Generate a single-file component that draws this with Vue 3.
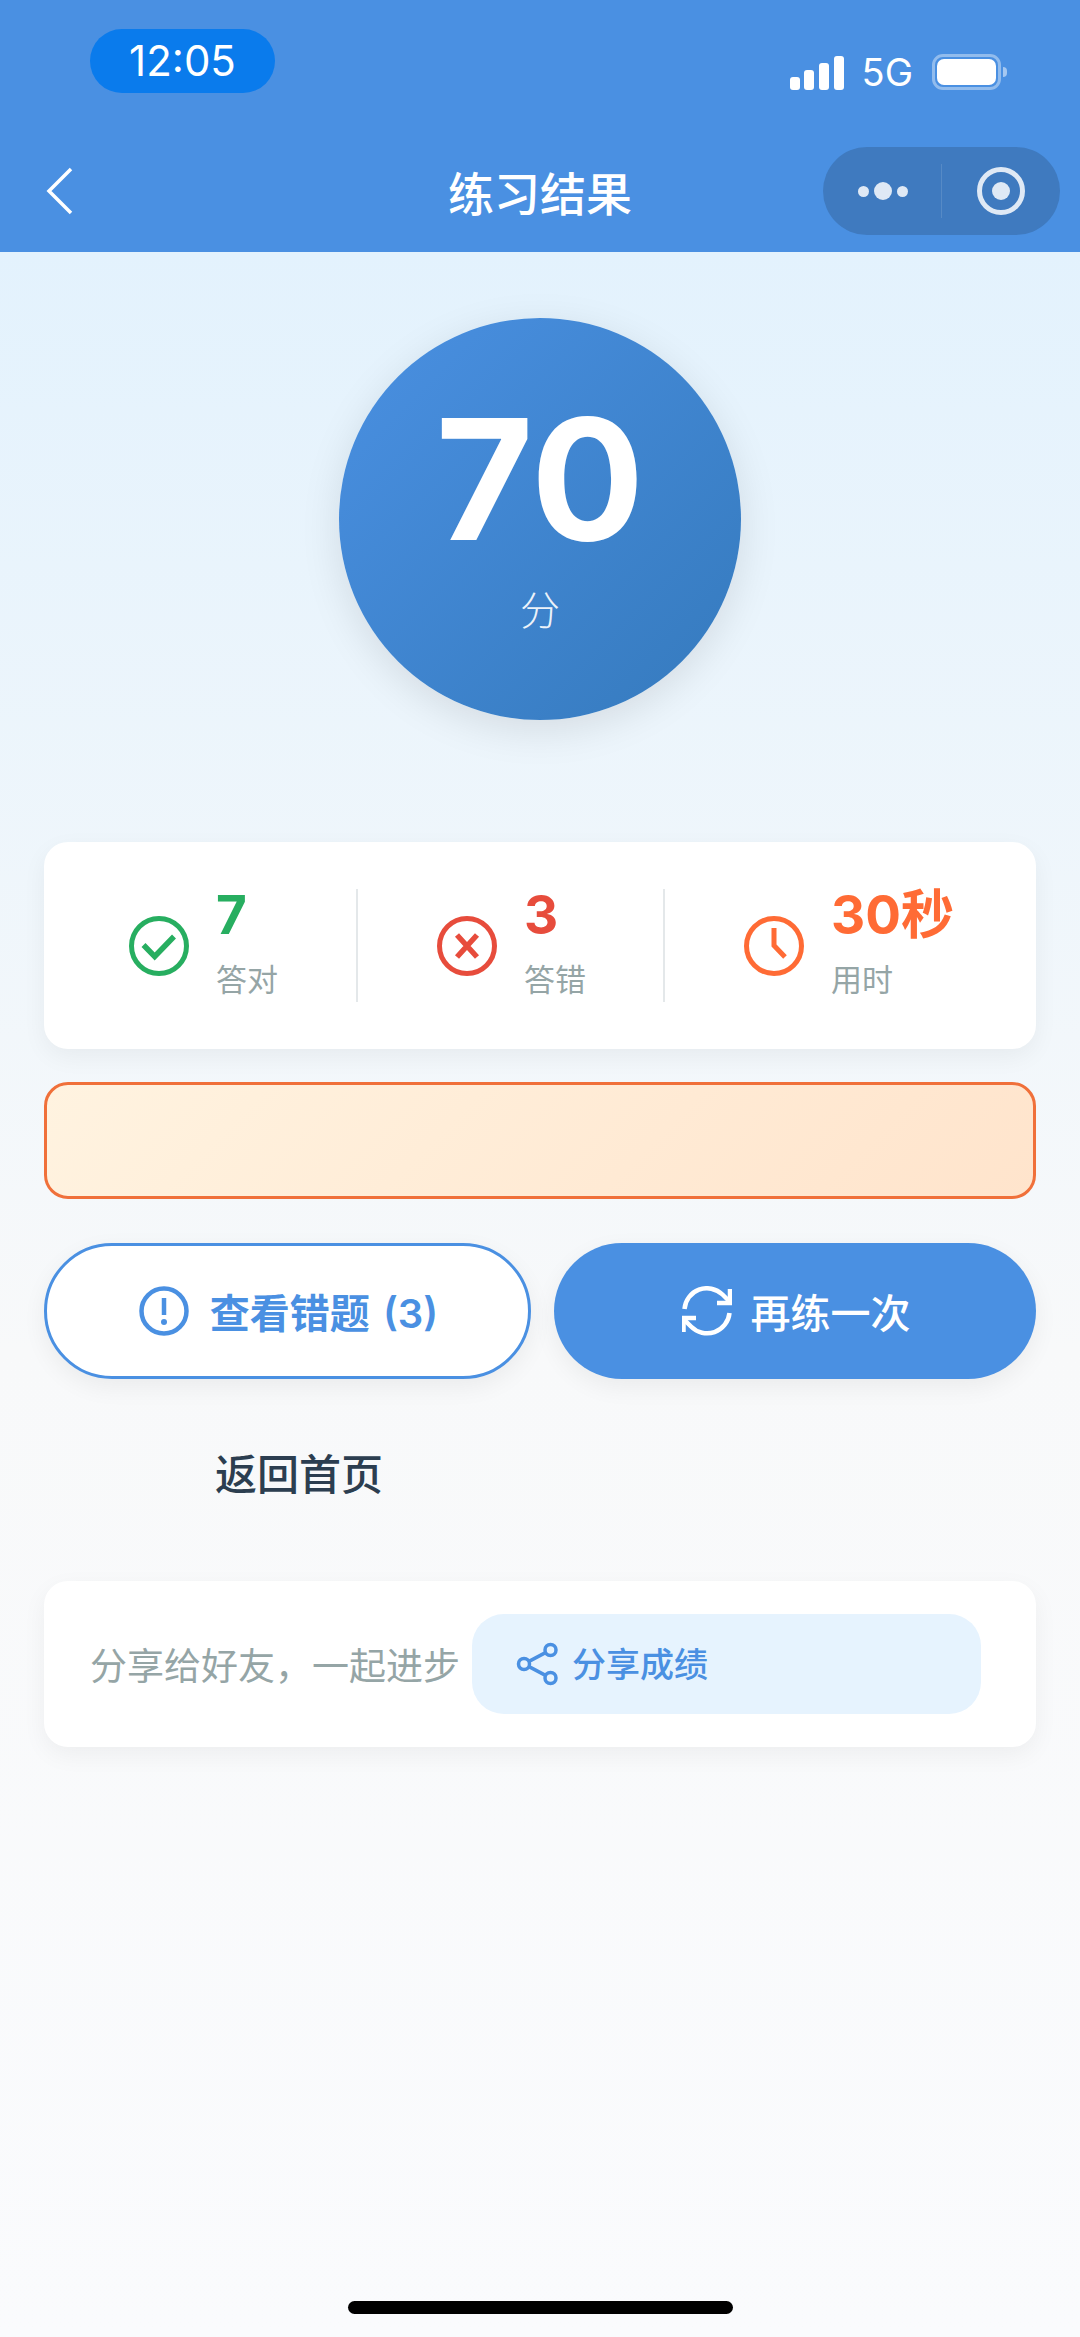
<template>
  <div class="page">
    <header class="header">
      <div class="status-bar">
        <div class="time-pill">{{ time }}</div>
        <div class="status-right">
          <div class="signal">
            <span v-for="h in signalBars" :key="h" class="signal-bar" :style="{ height: h + 'px' }"></span>
          </div>
          <span class="network">5G</span>
          <div class="battery">
            <div class="battery-level"></div>
          </div>
          <div class="battery-tip"></div>
        </div>
      </div>
      <div class="nav-bar">
        <svg class="back" width="30" height="50" viewBox="0 0 30 50">
          <polyline points="26,3 4,25 26,47" fill="none" stroke="#fff" stroke-width="3.5" />
        </svg>
        <div class="title">练习结果</div>
        <div class="capsule">
          <div class="capsule-dots">
            <span class="dot"></span>
            <span class="dot big"></span>
            <span class="dot"></span>
          </div>
          <div class="capsule-line"></div>
          <div class="capsule-target">
            <span class="target-core"></span>
          </div>
        </div>
      </div>
    </header>

    <main class="content">
      <div class="score-circle">
        <div class="score-num">{{ score }}</div>
        <div class="score-unit">分</div>
      </div>

      <section class="card stats">
        <div class="stat stat-ok">
          <svg class="stat-icon" width="60" height="60" viewBox="0 0 60 60" fill="none" stroke="#27ae60">
            <circle cx="30" cy="30" r="27.5" stroke-width="5" />
            <polyline points="14.5,29 25.7,40.5 45,20.5" stroke-width="5.5" />
          </svg>
          <div>
            <div class="stat-value">7</div>
            <div class="stat-label">答对</div>
          </div>
        </div>
        <div class="stat stat-bad">
          <svg class="stat-icon" width="60" height="60" viewBox="0 0 60 60" fill="none" stroke="#e74c3c">
            <circle cx="30" cy="30" r="27.5" stroke-width="5" />
            <path d="M20 19 L40 41 M40 19 L20 41" stroke-width="5.5" />
          </svg>
          <div>
            <div class="stat-value">3</div>
            <div class="stat-label">答错</div>
          </div>
        </div>
        <div class="stat stat-time">
          <svg class="stat-icon" width="60" height="60" viewBox="0 0 60 60" fill="none" stroke="#ff6b35">
            <circle cx="30" cy="30" r="27.5" stroke-width="5" />
            <polyline points="30,12 30,29.5 41,41" stroke-width="5" />
          </svg>
          <div>
            <div class="stat-value">30秒</div>
            <div class="stat-label">用时</div>
          </div>
        </div>
      </section>

      <div class="notice"></div>

      <div class="actions">
        <button class="btn btn-outline">
          <svg width="50" height="50" viewBox="0 0 50 50" fill="none" stroke="#4a90e2">
            <circle cx="25" cy="25" r="22.5" stroke-width="4.5" />
            <line x1="25" y1="12" x2="25" y2="29" stroke-width="4.5" />
            <circle cx="25" cy="36" r="3" fill="#4a90e2" stroke="none" />
          </svg>
          <span class="btn-text">查看错题 (3)</span>
        </button>
        <button class="btn btn-solid">
          <svg width="50" height="50" viewBox="0 0 50 50" fill="none" stroke="#fff" stroke-width="4.5">
            <polyline points="48,3 48,17 35,17" />
            <polyline points="1.5,46 1.5,32 14,32" />
            <path d="M2.5 23 A22.5 22.5 0 0 1 40.5 8.5 L48 16" />
            <path d="M47.5 27 A22.5 22.5 0 0 1 9 40.5 L1.5 33" />
          </svg>
          <span>再练一次</span>
        </button>
      </div>

      <div class="home-link">返回首页</div>

      <section class="card share">
        <span class="share-text">分享给好友，一起进步</span>
        <button class="share-btn">
          <svg width="44" height="44" viewBox="0 0 44 44" fill="none" stroke="#4a90e2" stroke-width="3.5">
            <circle cx="35.5" cy="8" r="5.5" />
            <circle cx="9" cy="22" r="5.5" />
            <circle cx="35.5" cy="36" r="5.5" />
            <path d="M14 19.4 L30.5 10.6 M14 24.6 L30.5 33.4" />
          </svg>
          <span class="share-label">分享成绩</span>
        </button>
      </section>
    </main>

    <div class="home-bar"></div>
  </div>
</template>

<script setup>
import { ref } from 'vue';

const time = ref('12:05');
const score = ref(70);
const signalBars = [13, 20, 27, 34];
</script>

<style scoped>
.page {
  width: 1080px;
  min-height: 2337px;
  display: flex;
  flex-direction: column;
  font-family: Inter, "Noto Sans CJK SC", sans-serif;
  background: linear-gradient(180deg, #e3f2fd 0, #e3f2fd 252px, #f8f9fa 1350px, #fafbfd 100%);
}

.header {
  height: 252px;
  background: #4a90e2;
  color: #fff;
  padding-top: 29px;
  box-sizing: border-box;
}

.status-bar {
  height: 64px;
  display: flex;
  justify-content: space-between;
  align-items: flex-start;
  padding: 0 73px 0 90px;
}

.time-pill {
  width: 185px;
  height: 64px;
  border-radius: 32px;
  background: #0a7bec;
  font-size: 42px;
  line-height: 64px;
  text-align: center;
}

.status-right {
  display: flex;
  align-items: center;
  margin-top: 25px;
}

.signal {
  display: flex;
  align-items: flex-end;
  gap: 4.6px;
  height: 35px;
}

.signal-bar {
  width: 10px;
  background: #fff;
  border-radius: 3px;
}

.network {
  font-size: 38px;
  line-height: 36px;
  margin-left: 18px;
  margin-right: 19px;
}

.battery {
  width: 69px;
  height: 36px;
  border: 3px solid rgba(255, 255, 255, 0.4);
  border-radius: 11px;
  padding: 2px;
  box-sizing: border-box;
}

.battery-level {
  width: 100%;
  height: 100%;
  background: #fff;
  border-radius: 7px;
}

.battery-tip {
  width: 4px;
  height: 10px;
  margin-left: 2px;
  background: rgba(255, 255, 255, 0.5);
  border-radius: 0 4px 4px 0;
}

.nav-bar {
  height: 88px;
  margin-top: 54px;
  display: grid;
  grid-template-columns: 1fr auto 1fr;
  align-items: center;
  padding: 0 20px;
}

.back {
  display: block;
  margin-left: 25px;
}

.title {
  font-size: 46px;
  font-weight: 500;
}

.capsule {
  justify-self: end;
  width: 237px;
  height: 88px;
  border-radius: 44px;
  background: #3f7abf;
  display: flex;
  align-items: center;
}

.capsule-dots {
  width: 118px;
  display: flex;
  justify-content: center;
  align-items: center;
  gap: 5px;
  padding-left: 2px;
  box-sizing: border-box;
}

.dot {
  width: 11px;
  height: 11px;
  border-radius: 50%;
  background: #dfe9f5;
}

.dot.big {
  width: 18px;
  height: 18px;
}

.capsule-line {
  width: 1px;
  height: 54px;
  background: rgba(255, 255, 255, 0.12);
}

.capsule-target {
  width: 48px;
  height: 48px;
  margin-left: 35px;
  border: 5px solid #dfe9f5;
  border-radius: 50%;
  box-sizing: border-box;
  display: flex;
  align-items: center;
  justify-content: center;
}

.target-core {
  width: 18px;
  height: 18px;
  border-radius: 50%;
  background: #dfe9f5;
}

.content {
  padding: 66px 44px 0;
  display: flex;
  flex-direction: column;
}

.score-circle {
  width: 402px;
  height: 402px;
  border-radius: 50%;
  align-self: center;
  background: linear-gradient(135deg, #4a90e2, #357abd);
  box-shadow: 0 10px 40px rgba(0, 0, 0, 0.1);
  color: #fff;
  text-align: center;
}

.score-num {
  font-size: 168px;
  font-weight: 700;
  line-height: 168px;
  margin-top: 77px;
}

.score-unit {
  font-size: 40px;
  line-height: 50px;
  margin-top: 23px;
  font-weight: 300;
  opacity: 0.9;
}

.card {
  background: #fff;
  border-radius: 24px;
  box-shadow: 0 8px 24px rgba(0, 0, 0, 0.05);
}

.stats {
  margin-top: 122px;
  height: 207px;
  padding: 47px 0;
  box-sizing: border-box;
  display: grid;
  grid-template-columns: 312px 307px 1fr;
}

.stat {
  display: flex;
  align-items: center;
  gap: 27px;
  padding-left: 85px;
}

.stat-bad,
.stat-time {
  border-left: 2px solid #e4e8ea;
  padding-left: 79px;
}

.stat-icon {
  flex: none;
}

.stat-value {
  font-size: 53px;
  font-weight: 700;
  line-height: 50px;
  margin-top: 1px;
}

.stat-label {
  font-size: 31px;
  line-height: 44px;
  margin-top: 18px;
  color: #95a5a6;
}

.stat-ok .stat-value {
  color: #27ae60;
}

.stat-bad .stat-value {
  color: #e74c3c;
}

.stat-time .stat-value {
  color: #ff6b35;
}

.notice {
  margin-top: 33px;
  height: 117px;
  border: 3px solid #f0703a;
  border-radius: 24px;
  background: linear-gradient(135deg, #fff3e0, #ffe4cc);
  box-sizing: border-box;
}

.actions {
  margin-top: 44px;
  display: grid;
  grid-template-columns: 487px 482px;
  gap: 23px;
}

.btn {
  height: 136px;
  border-radius: 68px;
  display: flex;
  align-items: center;
  justify-content: center;
  gap: 21px;
  padding: 0;
  font-family: inherit;
  font-size: 40px;
  font-weight: 600;
  box-shadow: 0 8px 24px rgba(0, 0, 0, 0.06);
  box-sizing: border-box;
}

.btn-text {
  word-spacing: 3px;
}

.btn-outline {
  background: #fff;
  border: 3px solid #4a90e2;
  color: #4a90e2;
  padding-left: 2px;
}

.btn-solid {
  background: #4a90e2;
  border: 0;
  color: #fff;
  font-weight: 500;
  gap: 19px;
  padding-left: 2px;
}

.home-link {
  margin: 68px 0 78px 171px;
  font-size: 42px;
  line-height: 56px;
  font-weight: 500;
  color: #2c3e50;
}

.share {
  height: 166px;
  padding: 33px 0 33px 46px;
  box-sizing: border-box;
  display: flex;
  align-items: center;
}

.share-text {
  font-size: 37px;
  color: #95a5a6;
  white-space: nowrap;
}

.share-btn {
  width: 509px;
  height: 100px;
  margin-left: 12px;
  padding: 0 0 0 43px;
  border: 0;
  border-radius: 32px;
  background: #e6f3fe;
  color: #4a90e2;
  font-family: inherit;
  font-size: 34px;
  font-weight: 500;
  display: flex;
  align-items: center;
  gap: 13px;
  box-sizing: border-box;
}

.share-label {
  margin-bottom: 4px;
}

.home-bar {
  width: 385px;
  height: 13px;
  border-radius: 7px;
  background: #000;
  align-self: center;
  margin-top: auto;
  margin-bottom: 23px;
}
</style>
